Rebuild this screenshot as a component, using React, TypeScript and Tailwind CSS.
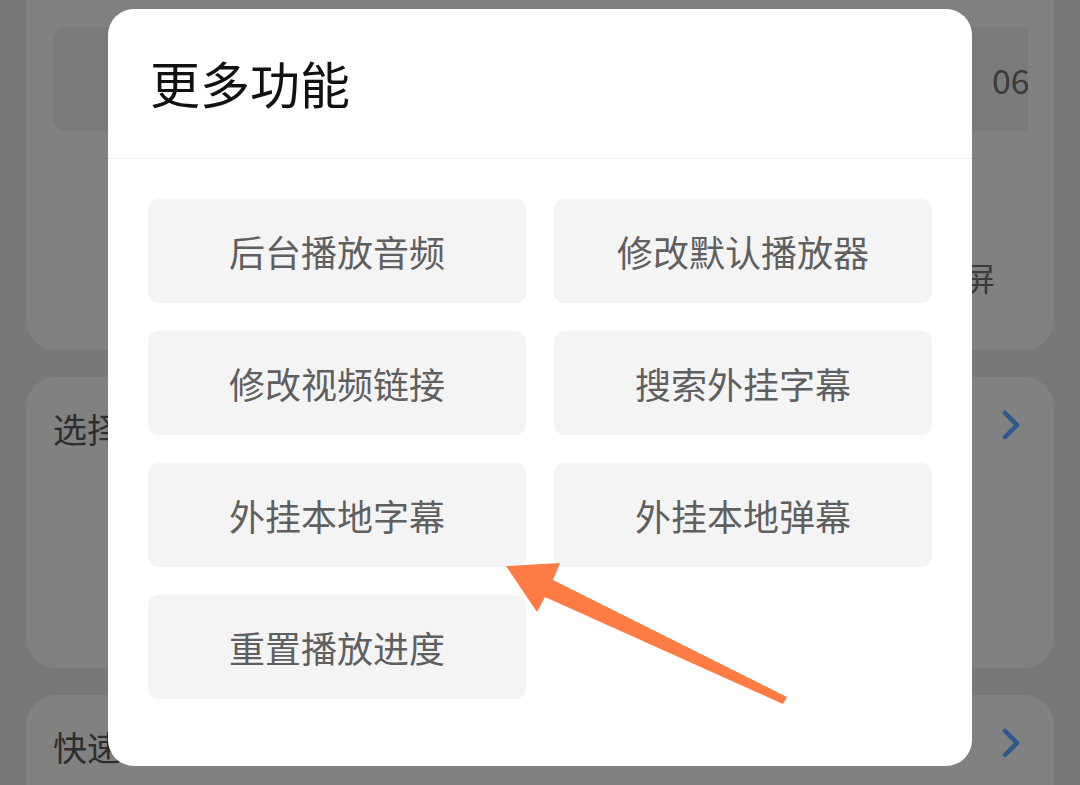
import React from 'react';

const font = { fontFamily: '"Noto Sans CJK SC", "Noto Sans", sans-serif' };

const actions = ['后台播放音频', '修改默认播放器', '修改视频链接', '搜索外挂字幕', '外挂本地字幕', '外挂本地弹幕', '重置播放进度'];

function Chevron() {
  return (
    <svg width="20" height="30" viewBox="0 0 20 30" className="shrink-0">
      <polyline points="4,3 16,15 4,27" fill="none" stroke="#2c5994" strokeWidth="4.5" strokeLinecap="round" strokeLinejoin="round" />
    </svg>
  );
}

export default function App() {
  return (
    <div className="relative w-[1080px] h-[785px] overflow-hidden bg-[#77787a]" style={font}>
      {/* page behind the dimmed overlay */}
      <div className="flex flex-col gap-[27px] px-[26px]">
        <div className="h-[350px] rounded-b-[30px] bg-[#818181] pt-[27px] pl-[27px] pr-[26px] flex flex-col">
          <div className="h-[104px] rounded-l-[14px] bg-[#7a7a7a] overflow-hidden whitespace-nowrap flex items-center pl-[939px] text-[34px] text-[#3b3b3b]">
            06:30
          </div>
          <div className="flex justify-between items-center mt-[122px] pl-[74px] pr-[33px] text-[32px] text-[#3b3b3b]">
            <span>一</span>
            <span>全屏</span>
          </div>
        </div>
        <div className="h-[291px] rounded-[30px] bg-[#818181] flex items-start justify-between pl-[27px] pr-[33px] pt-[26px]">
          <span className="text-[34px] text-[#2e2e2e]">选择</span>
          <div className="pt-[7px]"><Chevron /></div>
        </div>
        <div className="h-[140px] rounded-[30px] bg-[#818181] flex items-start justify-between pl-[27px] pr-[33px] pt-[26px]">
          <span className="text-[34px] text-[#2e2e2e]">快速</span>
          <div className="pt-[7px]"><Chevron /></div>
        </div>
      </div>

      {/* modal */}
      <div className="absolute left-[108px] top-[9px] w-[864px] h-[757px] rounded-[26px] bg-white flex flex-col">
        <div className="h-[150px] shrink-0 flex items-center pl-[42px] pb-[4px] border-b border-[#eeeeee]">
          <span className="text-[50px] leading-none text-[#111111]">更多功能</span>
        </div>
        <div className="grid grid-cols-2 gap-[28px] px-[40px] pt-[40px]">
          {actions.map((a) => (
            <div key={a} className="h-[104px] rounded-[10px] bg-[#f4f4f4] flex items-center justify-center text-[36px] text-[#5f5f5f]">
              {a}
            </div>
          ))}
        </div>
      </div>

      {/* annotation arrow */}
      <svg className="absolute left-0 top-0 pointer-events-none" width="1080" height="785">
        <polygon points="506,566 560,563 553,580 787,697 783,704 545,597 537,612" fill="#ff7b45" />
      </svg>
    </div>
  );
}
